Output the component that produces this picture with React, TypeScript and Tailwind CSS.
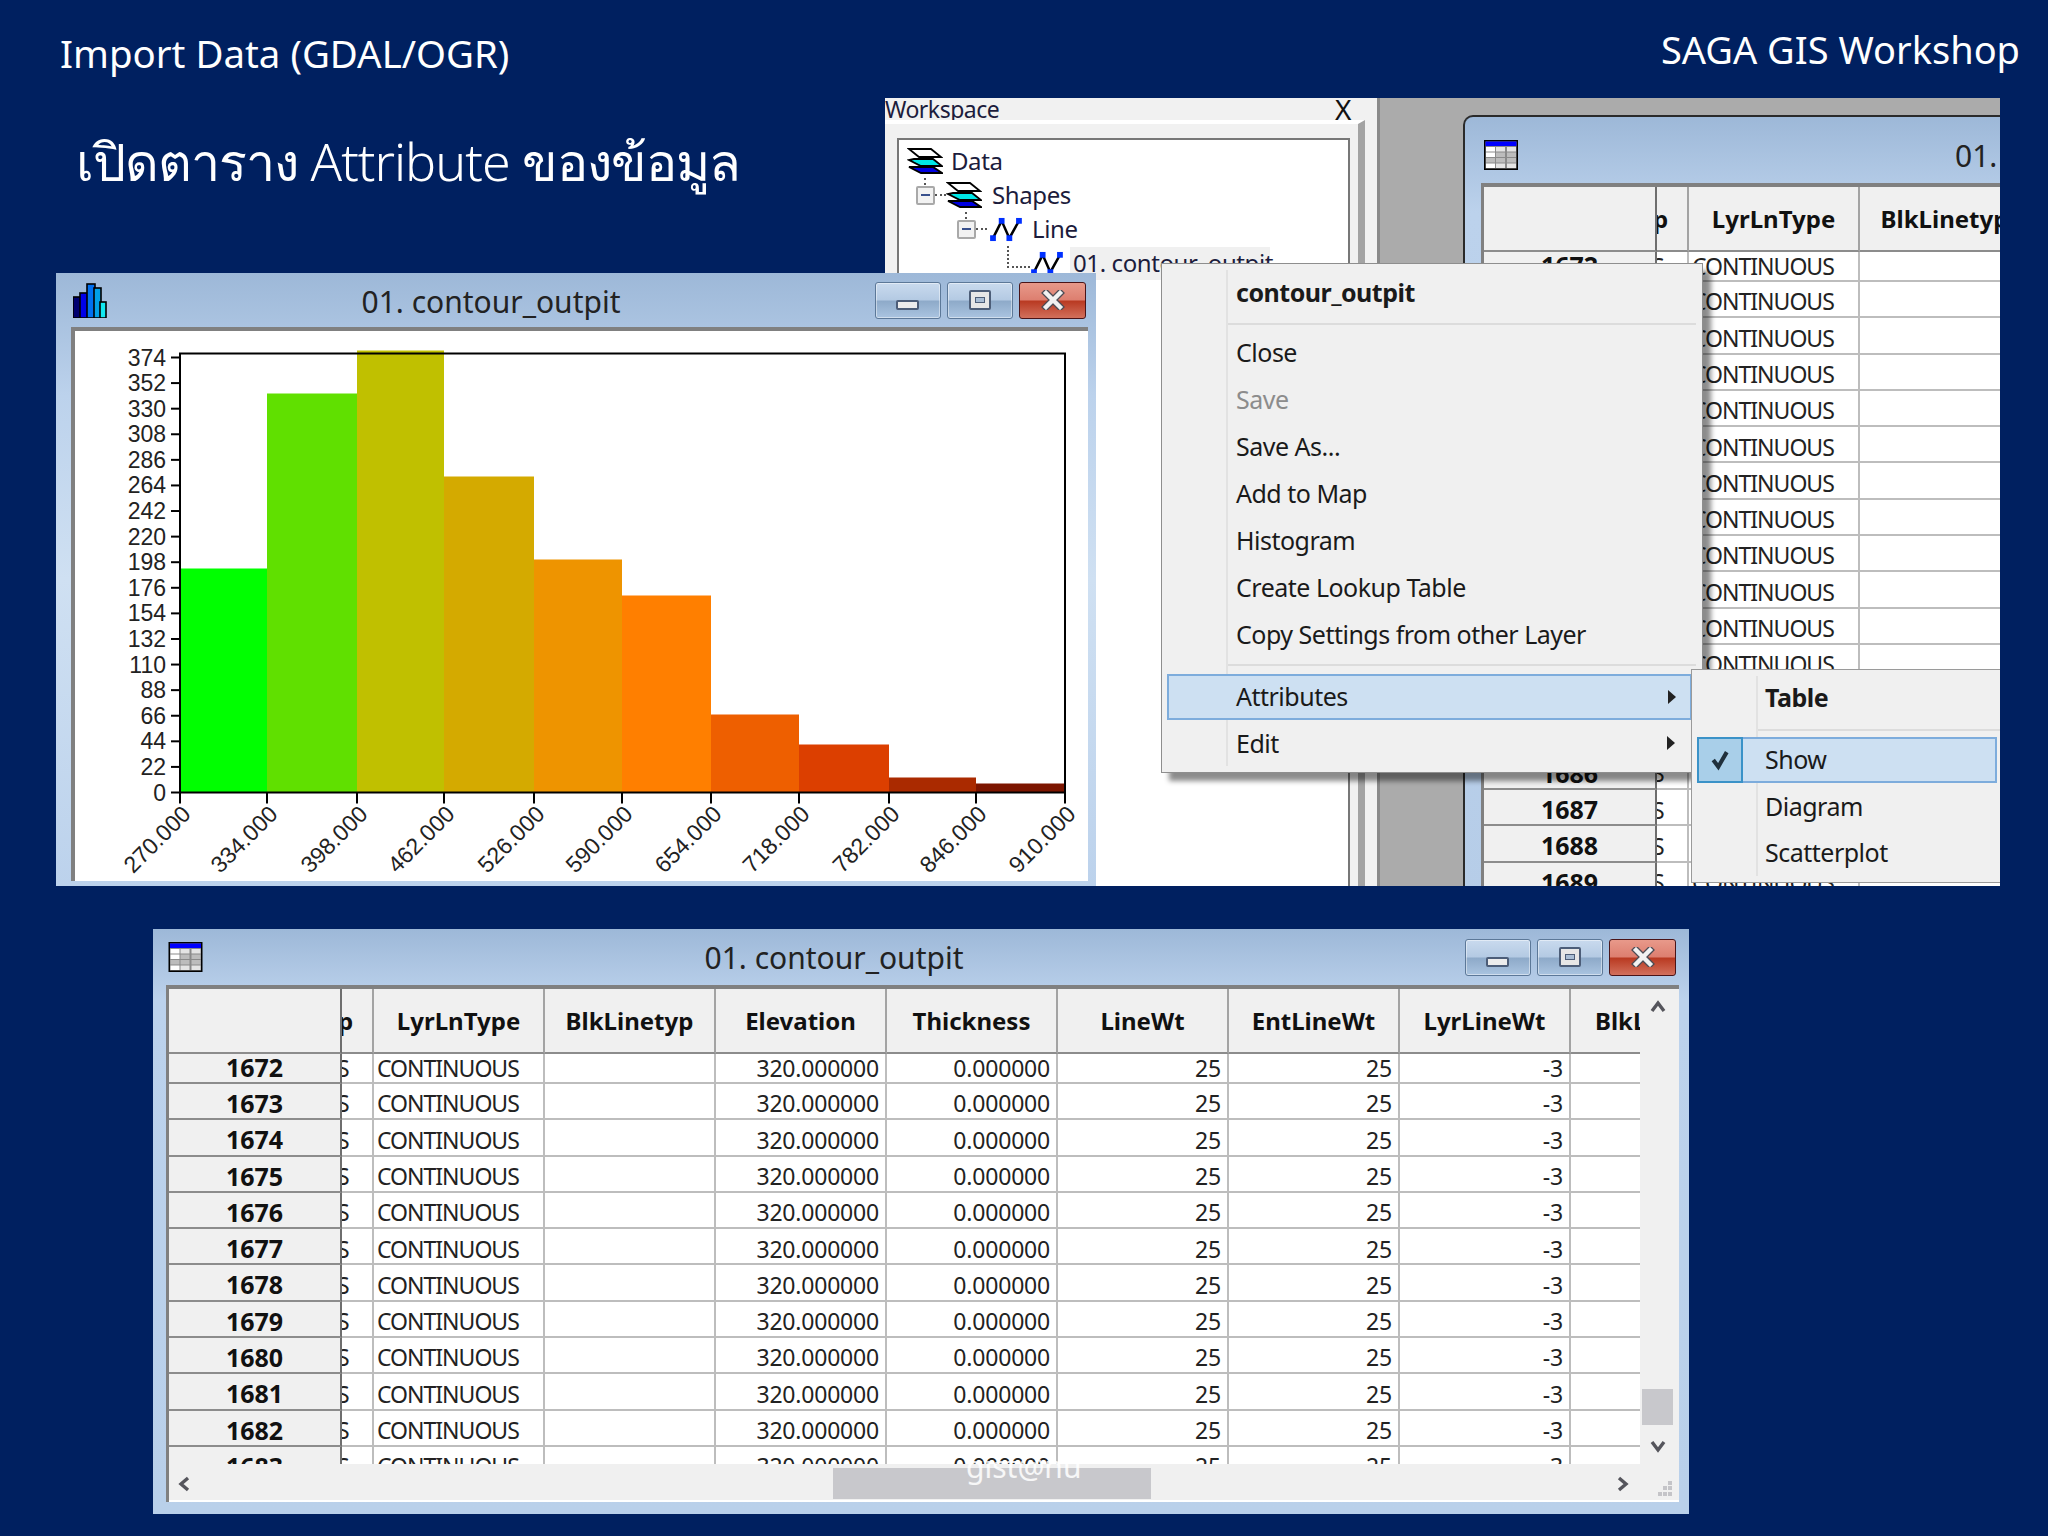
import clsx from 'clsx';

const BARS = [
  { x: 180, w: 87, top: 568, fill: '#00ff00' },
  { x: 267, w: 90, top: 393, fill: '#60e000' },
  { x: 357, w: 87, top: 350, fill: '#c0c000' },
  { x: 444, w: 90, top: 476, fill: '#d4aa00' },
  { x: 534, w: 88, top: 559, fill: '#ee9400' },
  { x: 622, w: 89, top: 595, fill: '#ff7f00' },
  { x: 711, w: 88, top: 714, fill: '#ee5f00' },
  { x: 799, w: 90, top: 744, fill: '#dc3f00' },
  { x: 889, w: 87, top: 777, fill: '#aa2a00' },
  { x: 976, w: 89, top: 783, fill: '#7c1500' },
];

const X_TICKS = [
  [180, '270.000'],
  [267, '334.000'],
  [357, '398.000'],
  [444, '462.000'],
  [534, '526.000'],
  [622, '590.000'],
  [711, '654.000'],
  [799, '718.000'],
  [889, '782.000'],
  [976, '846.000'],
  [1065, '910.000'],
] as const;

const Y_TICKS = Array.from({ length: 18 }, (_, i) => i * 22);

const COLUMNS = ['LyrLnType', 'BlkLinetyp', 'Elevation', 'Thickness', 'LineWt', 'EntLineWt', 'LyrLineWt'];

const ROW_CELLS = ['CONTINUOUS', '', '320.000000', '0.000000', '25', '25', '-3'];

const MENU_ITEMS = ['Close', 'Save', 'Save As...', 'Add to Map', 'Histogram', 'Create Lookup Table', 'Copy Settings from other Layer'];

const LayersIcon = ({ className }: { className: string }) => (
  <svg viewBox="0 0 36 26" className={clsx('shrink-0', className)}>
    <polygon points="9,19 26,19 35,25 14,25 2,19" fill="#0000e0" stroke="#000" strokeWidth="1.8" />
    <polygon points="7,11 26,11 35,18 14,18 2,12" fill="#00e8e8" stroke="#000" strokeWidth="1.8" />
    <polygon points="2,1 24,1 34,9 12,9" fill="#fff" stroke="#000" strokeWidth="1.8" />
  </svg>
);

const LineIcon = ({ className }: { className: string }) => (
  <svg viewBox="0 0 34 26" className={clsx('shrink-0', className)}>
    <polyline points="4,22 13,4 21,22 31,4" fill="none" stroke="#000" strokeWidth="2.6" />
    <rect x="1" y="19" width="6" height="6" fill="#0030ff" />
    <rect x="10" y="1" width="6" height="6" fill="#0030ff" />
    <rect x="18" y="19" width="6" height="6" fill="#0030ff" />
    <rect x="28" y="1" width="6" height="6" fill="#0030ff" />
  </svg>
);

const MinusBox = ({ className }: { className?: string }) => (
  <span className={clsx('relative flex h-[19px] w-[19px] shrink-0 items-center justify-center rounded-[2px] border-2 border-[#a9a9a9] bg-[#f2f2f2]', className)}>
    <span className="h-[2px] w-[9px] bg-[#38508c]" />
    <span className="absolute -top-[10px] left-[6px] h-[7px] border-l-2 border-dotted border-[#555]" />
  </span>
);

const TreeDots = () => <span className="h-0 w-[11px] shrink-0 border-t-2 border-dotted border-[#555]" />;

const TableIcon = ({ className }: { className: string }) => (
  <svg viewBox="0 0 34 30" className={clsx('shrink-0', className)}>
    <rect x="0" y="0" width="34" height="30" fill="#000" />
    <rect x="1.5" y="1.5" width="31" height="27" fill="#8a8a8a" />
    <rect x="1.5" y="1.5" width="31" height="4.5" fill="#0000ff" />
    {[7, 12.5, 18, 23.5].map((y, r) =>
      [2, 12, 23].map((x, c) => (
        <rect key={`${r}-${c}`} x={x} y={y} width="9" height="4.5" fill={r === 2 || (r === 1 && c > 0) ? '#bcbcbc' : c === 0 ? '#fff' : '#e4e4e4'} />
      )),
    )}
  </svg>
);

const HistIcon = () => (
  <svg viewBox="0 0 34 35" className="h-[35px] w-[34px] shrink-0">
    <rect x="0" y="14" width="9" height="21" fill="#000070" stroke="#000" strokeWidth="1.6" />
    <rect x="7" y="10" width="8" height="25" fill="#0000e8" stroke="#000" strokeWidth="1.6" />
    <rect x="14" y="1" width="8" height="34" fill="#0070f0" stroke="#000" strokeWidth="1.6" />
    <rect x="21" y="5" width="7" height="30" fill="#00a0e8" stroke="#000" strokeWidth="1.6" />
    <rect x="27" y="19" width="6" height="16" fill="#10e8f0" stroke="#000" strokeWidth="1.6" />
  </svg>
);

const WindowButtons = () => (
  <div className="flex shrink-0 gap-[6px]">
    <span className="relative h-[37px] w-[66px] overflow-hidden rounded-[3px] border border-[#5c7898] bg-[linear-gradient(#c9daee_0%,#b4cae3_48%,#8eaac9_52%,#aac4e0_100%)] shadow-[inset_0_0_0_1px_rgba(255,255,255,0.45)]">
      <span className="absolute left-[20px] top-[17px] h-[10px] w-[23px] rounded-[2px] border-2 border-[#4c5d78] bg-[#ececec]" />
    </span>
    <span className="relative h-[37px] w-[66px] overflow-hidden rounded-[3px] border border-[#5c7898] bg-[linear-gradient(#c9daee_0%,#b4cae3_48%,#8eaac9_52%,#aac4e0_100%)] shadow-[inset_0_0_0_1px_rgba(255,255,255,0.45)]">
      <span className="absolute left-[21px] top-[7px] flex h-[20px] w-[22px] items-center justify-center rounded-[2px] border-2 border-[#4c5d78] bg-[#e6e6e6]">
        <span className="h-[6px] w-[10px] border border-[#4c5d78] bg-[#a9bdd4]" />
      </span>
    </span>
    <span className="relative flex h-[37px] w-[67px] items-center justify-center overflow-hidden rounded-[3px] border border-[#4a1418] bg-[linear-gradient(#e8998a_0%,#dd7f70_48%,#b93a22_52%,#d2705c_100%)]">
      <svg viewBox="0 0 24 20" className="h-[20px] w-[24px]">
        <path d="M5 3 L19 17 M19 3 L5 17" stroke="#4c4c55" strokeWidth="7" strokeLinecap="square" />
        <path d="M5 3 L19 17 M19 3 L5 17" stroke="#f1f1f1" strokeWidth="4.4" strokeLinecap="square" />
      </svg>
    </span>
  </div>
);

const HeaderCell = ({ label }: { label: string }) => (
  <div className="flex h-[65px] w-[171px] shrink-0 items-center justify-center border-r-2 border-b-2 border-r-[#a3a3a3] border-b-[#8c8c8c] bg-[#f0f0f0] text-[24px] font-bold text-[#111]">
    {label}
  </div>
);

const GridHeader = () => (
  <div className="flex">
    <div className="h-[65px] w-[173px] shrink-0 border-r-2 border-b-2 border-r-[#6e6e6e] border-b-[#8c8c8c] bg-[#f0f0f0]" />
    <div className="flex h-[65px] w-[32px] shrink-0 items-center overflow-hidden border-r-2 border-b-2 border-r-[#a3a3a3] border-b-[#8c8c8c] bg-[#f0f0f0] text-[24px] font-bold text-[#111]">
      <span className="-ml-[4px]">p</span>
    </div>
    {COLUMNS.map((c) => (
      <HeaderCell key={c} label={c} />
    ))}
    <div className="flex h-[65px] w-[171px] shrink-0 items-center overflow-hidden border-b-2 border-b-[#8c8c8c] bg-[#f0f0f0] pl-[24px] text-[24px] font-bold text-[#111]">
      BlkLinetyp
    </div>
  </div>
);

const GridRow = ({ id, first }: { id: number; first: boolean }) => (
  <div className={clsx('flex', first ? 'h-[30px]' : 'h-[36.3px]')}>
    <div className={clsx('flex w-[173px] shrink-0 items-center justify-center border-r-2 border-b-2 border-r-[#6e6e6e] border-b-[#8c8c8c] bg-[#f0f0f0] text-[25px] font-bold text-[#111]', !first && 'pt-[5px]')}>
      {id}
    </div>
    <div className={clsx('flex w-[32px] shrink-0 items-center overflow-hidden border-r-2 border-b-2 border-[#bdbdbd] text-[23px] text-[#222]', !first && 'pt-[5px]')}>
      <span className="-ml-[5px]">S</span>
    </div>
    {ROW_CELLS.map((v, i) => (
      <div
        key={i}
        className={clsx(
          'flex w-[171px] shrink-0 items-center border-r-2 border-b-2 border-[#bdbdbd] text-[23px] text-[#222]',
          i === 0 ? 'justify-start pl-[3px] tracking-[-1px]' : 'justify-end pr-[6px] tracking-[-0.2px]',
          !first && 'pt-[5px]',
        )}
      >
        {v}
      </div>
    ))}
    <div className="w-[171px] shrink-0 border-b-2 border-[#bdbdbd]" />
  </div>
);

const DataGrid = ({ rows }: { rows: number }) => (
  <>
    <GridHeader />
    {Array.from({ length: rows }, (_, i) => (
      <GridRow key={i} id={1672 + i} first={i === 0} />
    ))}
  </>
);

const Chevron = ({ d, className }: { d: string; className: string }) => (
  <svg viewBox="0 0 16 16" className={className}>
    <path d={d} fill="none" stroke="#55555c" strokeWidth="3.4" />
  </svg>
);

const Arrow = () => (
  <svg viewBox="0 0 8 14" className="h-[14px] w-[8px]">
    <polygon points="0,0 8,7 0,14" fill="#222" />
  </svg>
);

const Histogram = () => (
  <svg viewBox="75 331 1013 549" className="h-full w-full">
    {BARS.map((b) => (
      <rect key={b.x} x={b.x} y={b.top} width={b.w} height={792 - b.top} fill={b.fill} />
    ))}
    <rect x="180" y="353" width="885" height="439" fill="none" stroke="#000" strokeWidth="2" />
    {Y_TICKS.map((v, i) => {
      const y = 792 - (i * 435) / 17;
      return (
        <g key={v}>
          <line x1="171" x2="180" y1={y} y2={y} stroke="#000" strokeWidth="2" />
          <text x="166" y={y + 8} textAnchor="end" fontSize="23" fill="#222" fontFamily="'Liberation Sans', sans-serif">
            {v}
          </text>
        </g>
      );
    })}
    {X_TICKS.map(([x, label]) => (
      <g key={label}>
        <line x1={x} x2={x} y1="792" y2="803" stroke="#000" strokeWidth="2" />
        <text
          transform={`translate(${x + 12} 815) rotate(-45)`}
          textAnchor="end"
          fontSize="23"
          fill="#222"
          fontFamily="'Liberation Sans', sans-serif"
        >
          {label}
        </text>
      </g>
    ))}
  </svg>
);

const ContextMenu = () => (
  <div className="absolute left-[276px] top-[165px] flex h-[510px] w-[542px] flex-col border border-[#8e8e8e] bg-[#f0f0f0] text-[25px] tracking-[-0.5px] text-[#1a1a1a] shadow-[8px_8px_5px_rgba(0,0,0,0.45)]">
    <span className="absolute bottom-[6px] left-[64px] top-[6px] w-[2px] bg-[#e2e2e2]" />
    <div className="flex h-[57px] shrink-0 items-center pl-[74px] font-bold">contour_outpit</div>
    <div className="ml-[65px] mr-[6px] mt-[2px] h-[2px] shrink-0 bg-[#dcdcdc]" />
    <div className="flex flex-col pt-[4px]">
      {MENU_ITEMS.map((item) => (
        <div key={item} className={clsx('flex h-[47px] items-center pl-[74px]', item === 'Save' && 'text-[#8c8c8c]')}>
          {item}
        </div>
      ))}
    </div>
    <div className="ml-[65px] mr-[6px] mt-[6px] h-[2px] shrink-0 bg-[#dcdcdc]" />
    <div className="relative ml-[5px] mt-[8px] flex h-[46px] w-[525px] shrink-0 items-center border-2 border-[#7dacdc] bg-[#cde0f2] pl-[67px]">
      Attributes
      <span className="absolute right-[14px] top-[14px]">
        <Arrow />
      </span>
    </div>
    <div className="relative flex h-[47px] shrink-0 items-center pl-[74px]">
      Edit
      <span className="absolute right-[27px] top-[16px]">
        <Arrow />
      </span>
    </div>
  </div>
);

const SubMenu = () => (
  <div className="absolute left-[806px] top-[571px] flex h-[214px] w-[330px] flex-col border border-[#9a9a9a] bg-[#f0f0f0] text-[25px] tracking-[-0.5px] text-[#1a1a1a]">
    <span className="absolute bottom-[6px] left-[64px] top-[6px] w-[2px] bg-[#e2e2e2]" />
    <div className="flex h-[55px] shrink-0 items-center pl-[73px] font-bold">Table</div>
    <div className="ml-[65px] mt-[4px] h-[2px] shrink-0 bg-[#dcdcdc]" />
    <div className="relative ml-[5px] mt-[6px] flex h-[46px] w-[300px] shrink-0 items-center border-2 border-[#7dacdc] bg-[#cde0f2] pl-[66px]">
      <span className="absolute -left-[2px] -top-[2px] flex h-[46px] w-[46px] items-center justify-center border-2 border-[#3a92c8] bg-[#a9cfe9]">
        <svg viewBox="0 0 16 18" className="h-[22px] w-[18px]">
          <path d="M2 9 L6.5 15 L14 2" fill="none" stroke="#20303c" strokeWidth="3.6" />
        </svg>
      </span>
      Show
    </div>
    <div className="flex h-[47px] shrink-0 items-center pl-[73px]">Diagram</div>
    <div className="flex h-[46px] shrink-0 items-center pl-[73px]">Scatterplot</div>
  </div>
);

const TopTableWindow = () => (
  <div className="absolute left-[578px] top-[17px] flex h-[800px] w-[700px] flex-col rounded-tl-[10px] border-t-2 border-l-2 border-[#2a2a2a] bg-[linear-gradient(#9db8d8,#bcd2ec_12%,#b6cde8)] pl-[16px]">
    <div className="flex h-[66px] shrink-0 items-center pt-[10px]">
      <TableIcon className="ml-[3px] h-[30px] w-[34px]" />
      <span className="ml-[437px] whitespace-nowrap text-[30px] text-[#222]">01. contour_outpit</span>
    </div>
    <div className="flex-1 overflow-hidden border-t-4 border-l-[3px] border-[#808080] bg-white">
      <DataGrid rows={19} />
    </div>
  </div>
);

const WorkspacePanel = () => (
  <div className="flex h-full w-[495px] flex-col border-r-[3px] border-[#8a8a8a] bg-[#f1f1f1] pr-[12px] text-[#1c1c3c]">
    <div className="flex h-[22px] shrink-0 items-center justify-between pr-[14px] text-[23px] tracking-[-0.5px]">
      <span>Workspace</span>
      <span className="text-[28px] leading-none text-[#111]">X</span>
    </div>
    <div className="flex flex-1 flex-col border-t-4 border-r-[7px] border-t-white border-r-[#a3a3a3] pl-[12px] pr-[8px] pt-[14px]">
      <div className="flex flex-1 flex-col border-t-2 border-l-2 border-r-2 border-[#777] bg-white pl-[8px] pt-[4px] text-[24px] tracking-[-0.4px]">
        <div className="flex h-[34px] items-center gap-[8px]">
          <LayersIcon className="h-[26px] w-[36px]" />
          <span>Data</span>
        </div>
        <div className="flex h-[34px] items-center pl-[9px]">
          <MinusBox />
          <TreeDots />
          <LayersIcon className="h-[26px] w-[36px]" />
          <span className="ml-[10px]">Shapes</span>
        </div>
        <div className="flex h-[34px] items-center pl-[50px]">
          <MinusBox />
          <TreeDots />
          <LineIcon className="ml-[2px] h-[25px] w-[33px]" />
          <span className="ml-[10px]">Line</span>
        </div>
        <div className="flex h-[34px] items-center pl-[100px]">
          <span className="-mt-[12px] h-[22px] w-[23px] shrink-0 border-b-2 border-l-2 border-dotted border-[#555]" />
          <LineIcon className="h-[25px] w-[33px]" />
          <span className="ml-[7px] flex h-[33px] w-[200px] items-center whitespace-nowrap bg-[#f0f0f0] pl-[3px]">01. contour_outpit</span>
        </div>
      </div>
    </div>
  </div>
);

const HistogramWindow = () => (
  <div className="absolute left-[56px] top-[273px] flex h-[613px] w-[1040px] flex-col bg-[linear-gradient(#9db8d8,#bcd2ec_20%,#cfe0f2_50%,#bcd2ec)] pb-[5px] pl-[15px] pr-[8px]">
    <div className="flex h-[54px] shrink-0 items-center pl-[2px] pr-[2px]">
      <HistIcon />
      <span className="flex-1 pt-[2px] text-center text-[30px] text-[#222]">01. contour_outpit</span>
      <WindowButtons />
    </div>
    <div className="flex-1 border-t-4 border-l-4 border-[#808080] bg-white">
      <Histogram />
    </div>
  </div>
);

const TableWindow = () => (
  <div className="absolute left-[153px] top-[929px] flex h-[585px] w-[1536px] flex-col bg-[linear-gradient(#9db8d8,#bcd2ec_12%,#b9d0ea)] pb-[12px] pl-[13px] pr-[10px]">
    <div className="flex h-[56px] shrink-0 items-center pr-[3px]">
      <TableIcon className="ml-[2px] h-[30px] w-[35px]" />
      <span className="flex-1 text-center text-[30px] text-[#222]">01. contour_outpit</span>
      <WindowButtons />
    </div>
    <div className="flex min-h-0 flex-1 flex-col border-t-4 border-l-[3px] border-[#808080] bg-[#f0f0f0]">
      <div className="flex min-h-0 flex-1">
        <div className="h-[475px] w-[1471px] overflow-hidden bg-white">
          <DataGrid rows={12} />
        </div>
        <div className="flex h-[475px] w-[39px] flex-col items-center bg-[#f0f0f0] pr-[4px]">
          <Chevron d="M2 12 L8 4 L14 12" className="mt-[10px] h-[16px] w-[16px]" />
          <div className="mt-[374px] h-[36px] w-[31px] bg-[#c8c8cc]" />
          <Chevron d="M2 4 L8 12 L14 4" className="mt-[13px] h-[16px] w-[16px]" />
        </div>
      </div>
      <div className="relative flex h-[34px] shrink-0 items-start border-b-2 border-white pl-[8px]">
        <Chevron d="M11 2 L4 8 L11 14" className="mt-[8px] h-[16px] w-[16px]" />
        <div className="ml-[640px] h-[31px] w-[318px] bg-[#c8c8cc]" />
        <Chevron d="M5 2 L12 8 L5 14" className="ml-[463px] mt-[8px] h-[16px] w-[16px]" />
        <svg viewBox="0 0 18 18" className="absolute bottom-[2px] right-[6px] h-[18px] w-[18px]">
          {[[13, 1], [8, 6], [13, 6], [3, 12], [8, 12], [13, 12]].map(([x, y]) => (
            <rect key={`${x}-${y}`} x={x} y={y} width="4" height="4" fill="#c4c4c8" />
          ))}
        </svg>
      </div>
    </div>
  </div>
);

export default function App() {
  return (
    <div className="relative h-[1536px] w-[2048px] overflow-hidden bg-[#002060] font-['Noto_Sans',sans-serif] text-white">
      <div className="flex items-start justify-between pl-[60px] pr-[28px] pt-[24px]">
        <h1 className="mt-[2px] text-[38.4px] leading-[55px] font-normal">Import Data (GDAL/OGR)</h1>
        <div className="text-[38px] leading-[50px]">SAGA GIS Workshop</div>
      </div>
      <h2 className="ml-[76px] mt-[42px] text-[52px] leading-[76px] font-light tracking-[-1px]">เปิดตาราง Attribute ของข้อมูล</h2>

      <div className="absolute left-[885px] top-[98px] h-[788px] w-[1115px] overflow-hidden bg-[#ababab]">
        <WorkspacePanel />
        <TopTableWindow />
        <ContextMenu />
        <SubMenu />
      </div>

      <HistogramWindow />
      <TableWindow />

      <div className="absolute left-[966px] top-[1446px] text-[30px] leading-[42px] text-white/85">gist@nu</div>
    </div>
  );
}
